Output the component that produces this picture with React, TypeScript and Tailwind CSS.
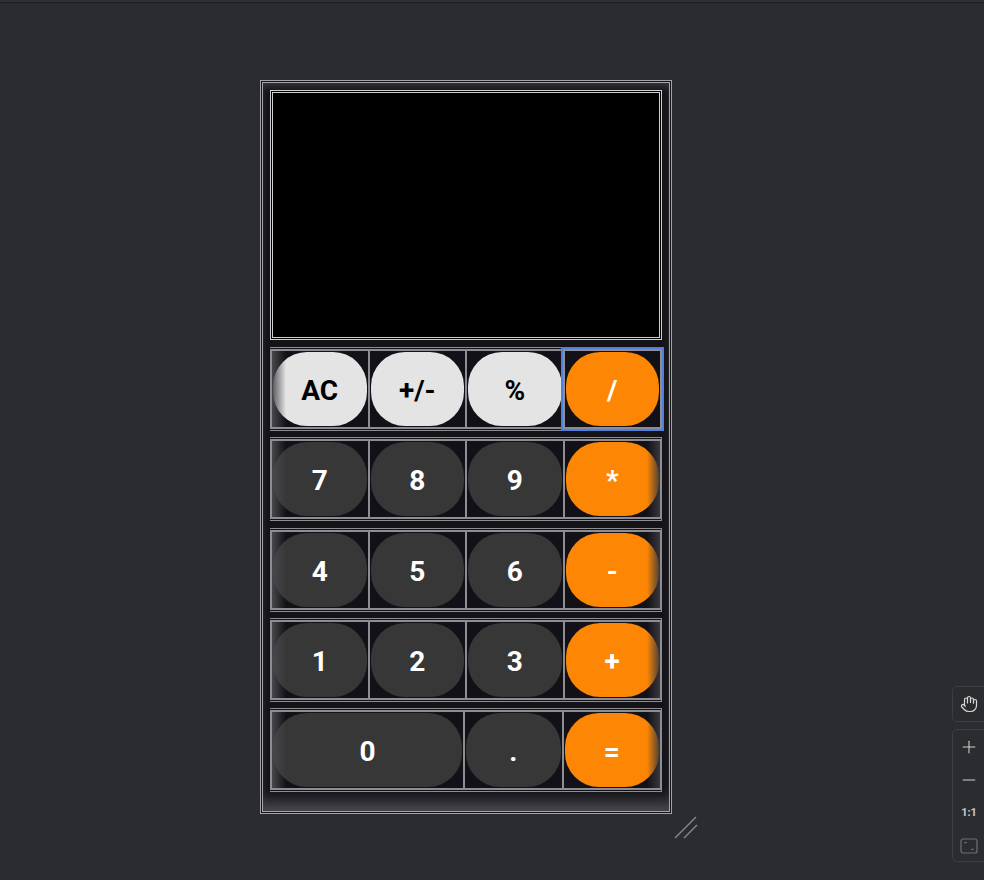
import React from "react";
import { Hand, Plus, Minus } from "lucide-react";

type Key = { label: string; kind: "light" | "dark" | "orange"; span?: number; focus?: boolean };

const rows: Key[][] = [
  [
    { label: "AC", kind: "light" },
    { label: "+/-", kind: "light" },
    { label: "%", kind: "light" },
    { label: "/", kind: "orange", focus: true },
  ],
  [
    { label: "7", kind: "dark" },
    { label: "8", kind: "dark" },
    { label: "9", kind: "dark" },
    { label: "*", kind: "orange" },
  ],
  [
    { label: "4", kind: "dark" },
    { label: "5", kind: "dark" },
    { label: "6", kind: "dark" },
    { label: "-", kind: "orange" },
  ],
  [
    { label: "1", kind: "dark" },
    { label: "2", kind: "dark" },
    { label: "3", kind: "dark" },
    { label: "+", kind: "orange" },
  ],
  [
    { label: "0", kind: "dark", span: 2 },
    { label: ".", kind: "dark" },
    { label: "=", kind: "orange" },
  ],
];

function KeyButton({ k }: { k: Key }) {
  const color =
    k.kind === "light"
      ? "bg-[#e4e4e4] text-black"
      : k.kind === "dark"
      ? "bg-[#373737] text-white"
      : "bg-[#fd8604] text-white";
  return (
    <div
      className={
        (k.span === 2 ? "flex-[2] " : "flex-1 ") +
        "min-w-0 border border-[#8d8d92] bg-[#121117] p-[1px] " +
        (k.focus ? "outline-2 outline-[#4f80e0] outline-offset-[1px] relative z-10" : "")
      }
    >
      <div
        className={
          "flex h-full w-full items-center justify-center rounded-[34px] pt-[4px] text-[28px] font-bold leading-none " +
          color
        }
      >
        {k.label}
      </div>
    </div>
  );
}

export default function App() {
  return (
    <div
      className="relative min-h-[880px] w-full overflow-hidden bg-[#2b2c30]"
      style={{ fontFamily: "Roboto, 'Liberation Sans', sans-serif" }}
    >
      <div className="h-[3px] border-b border-[#1c1d20] bg-[#303135]" />
      <div className="pl-[260px] pt-[77px]">
        <div className="w-[412px] border-[3px] border-double border-[#a3a3a8] bg-[#141318] px-[7px] pb-[19px] pt-[7px] shadow-[inset_0_8px_8px_-5px_#3c3c42,inset_0_-16px_14px_-6px_#48484e]">
          <div className="h-[250px] border-[3px] border-double border-[#d0d0d0] bg-black" />
          <div className="mt-[7px] flex flex-col gap-[6.3px]">
            {rows.map((row, i) => (
              <div
                key={i}
                className="relative flex h-[84px] border-x-[1px] border-y-[3px] border-double border-[#8d8d92] bg-[#121117]"
              >
                {row.map((k) => (
                  <KeyButton key={k.label} k={k} />
                ))}
                <div className="pointer-events-none absolute bottom-[1px] left-[1px] top-[1px] w-[14px] bg-gradient-to-r from-[#4b4b4fee] to-transparent" />
                <div className="pointer-events-none absolute bottom-[1px] right-[1px] top-[1px] w-[13px] bg-gradient-to-l from-[#3a3a3ef0] to-transparent" />
              </div>
            ))}
          </div>
        </div>
      </div>

      {/* resize handle */}
      <svg className="absolute left-[673px] top-[815px]" width="26" height="26" viewBox="0 0 26 26">
        <line x1="2" y1="23" x2="23" y2="2" stroke="#8c8c90" strokeWidth="1.2" />
        <line x1="11" y1="23" x2="24" y2="10" stroke="#8c8c90" strokeWidth="1.2" />
      </svg>

      {/* right toolbar */}
      <div className="absolute left-[952px] top-[686px] flex h-[36px] w-[40px] items-center rounded-[5px] border border-[#3d3e43] bg-[#2b2c30] pl-[7px] text-[#d8d8d8]">
        <Hand size={18} strokeWidth={1.6} />
      </div>
      <div className="absolute left-[952px] top-[729px] flex h-[133px] w-[40px] flex-col items-start rounded-[5px] border border-[#3d3e43] bg-[#2b2c30] pl-[6px] pt-[7px] text-[#d0d0d0]">
        <div className="flex h-[20px] w-[20px] items-center justify-center">
          <Plus size={20} strokeWidth={1.3} />
        </div>
        <div className="mt-[13px] flex h-[20px] w-[20px] items-center justify-center">
          <Minus size={20} strokeWidth={1.3} />
        </div>
        <div className="mt-[13px] flex h-[20px] w-[20px] items-center justify-center text-[11px] font-bold text-[#c8c8c8]">
          1:1
        </div>
        <div className="mt-[13px] flex h-[20px] w-[20px] items-center justify-center">
          <svg width="18" height="16" viewBox="0 0 18 16" fill="none" stroke="#6e6f74" strokeWidth="1.2">
            <rect x="1" y="1" width="16" height="14" rx="2" />
            <path d="M5 5.5 V4.5 H7" />
            <path d="M13 10.5 V11.5 H11" />
          </svg>
        </div>
      </div>
    </div>
  );
}
